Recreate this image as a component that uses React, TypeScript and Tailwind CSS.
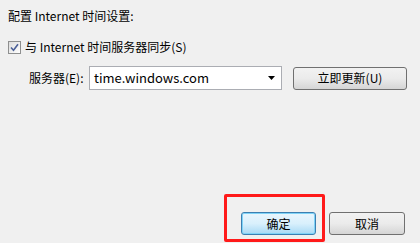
export default function App() {
  return (
    <div
      className="relative flex h-[243px] w-[420px] flex-col bg-[#f0f0f0] text-[12px] text-[#000]"
      style={{ fontFamily: '"Noto Sans CJK SC", "Noto Sans", sans-serif' }}
    >
      <div className="pl-[8px] pt-[8px] leading-[16px]">配置 Internet 时间设置:</div>

      <label className="mt-[16px] flex items-center pl-[8px] leading-[14px]">
        <span className="flex h-[13px] w-[13px] items-center justify-center border border-[#8e8f8f] bg-gradient-to-br from-[#dcdcdc] to-[#ffffff]">
          <svg width="9" height="9" viewBox="0 0 9 9">
            <path d="M1 4.5 L3.5 7.2 L8 1.2" fill="none" stroke="#4a5f97" strokeWidth="1.6" />
          </svg>
        </span>
        <span className="ml-[4px]">与 Internet 时间服务器同步(S)</span>
      </label>

      <div className="mt-[12px] flex items-center pl-[29px]">
        <span className="w-[60px] leading-[16px]">服务器(E):</span>
        <div className="flex h-[24px] w-[193px] items-center justify-between border border-[#abadb3] bg-white pl-[4px] pr-[6px]">
          <span className="text-[13px] leading-[16px]">time.windows.com</span>
          <svg width="7" height="4" viewBox="0 0 7 4">
            <path d="M0 0 H7 L3.5 4 Z" fill="#000" />
          </svg>
        </div>
        <button className="ml-[11px] h-[23px] w-[114px] rounded-[3px] border border-[#707070] bg-gradient-to-b from-[#f2f2f2] via-[#ebebeb] to-[#d5d5d5] leading-[16px]">
          立即更新(U)
        </button>
      </div>

      <div className="mt-auto flex justify-end gap-[13px] pb-[8px] pr-[15px]">
        <button className="h-[23px] w-[75px] rounded-[3px] border border-[#3c7fb1] bg-gradient-to-b from-[#eaf6fd] via-[#d9f0fc] to-[#a7d9f5] shadow-[inset_0_0_0_1px_#7fd3f7] leading-[16px]">
          确定
        </button>
        <button className="h-[23px] w-[76px] rounded-[3px] border border-[#707070] bg-gradient-to-b from-[#f2f2f2] via-[#ebebeb] to-[#d5d5d5] leading-[16px]">
          取消
        </button>
      </div>

      <div className="absolute left-[224px] top-[194px] h-[48px] w-[101px] rounded-[2px] border-[3px] border-[#ff1a1a]" />
    </div>
  );
}
